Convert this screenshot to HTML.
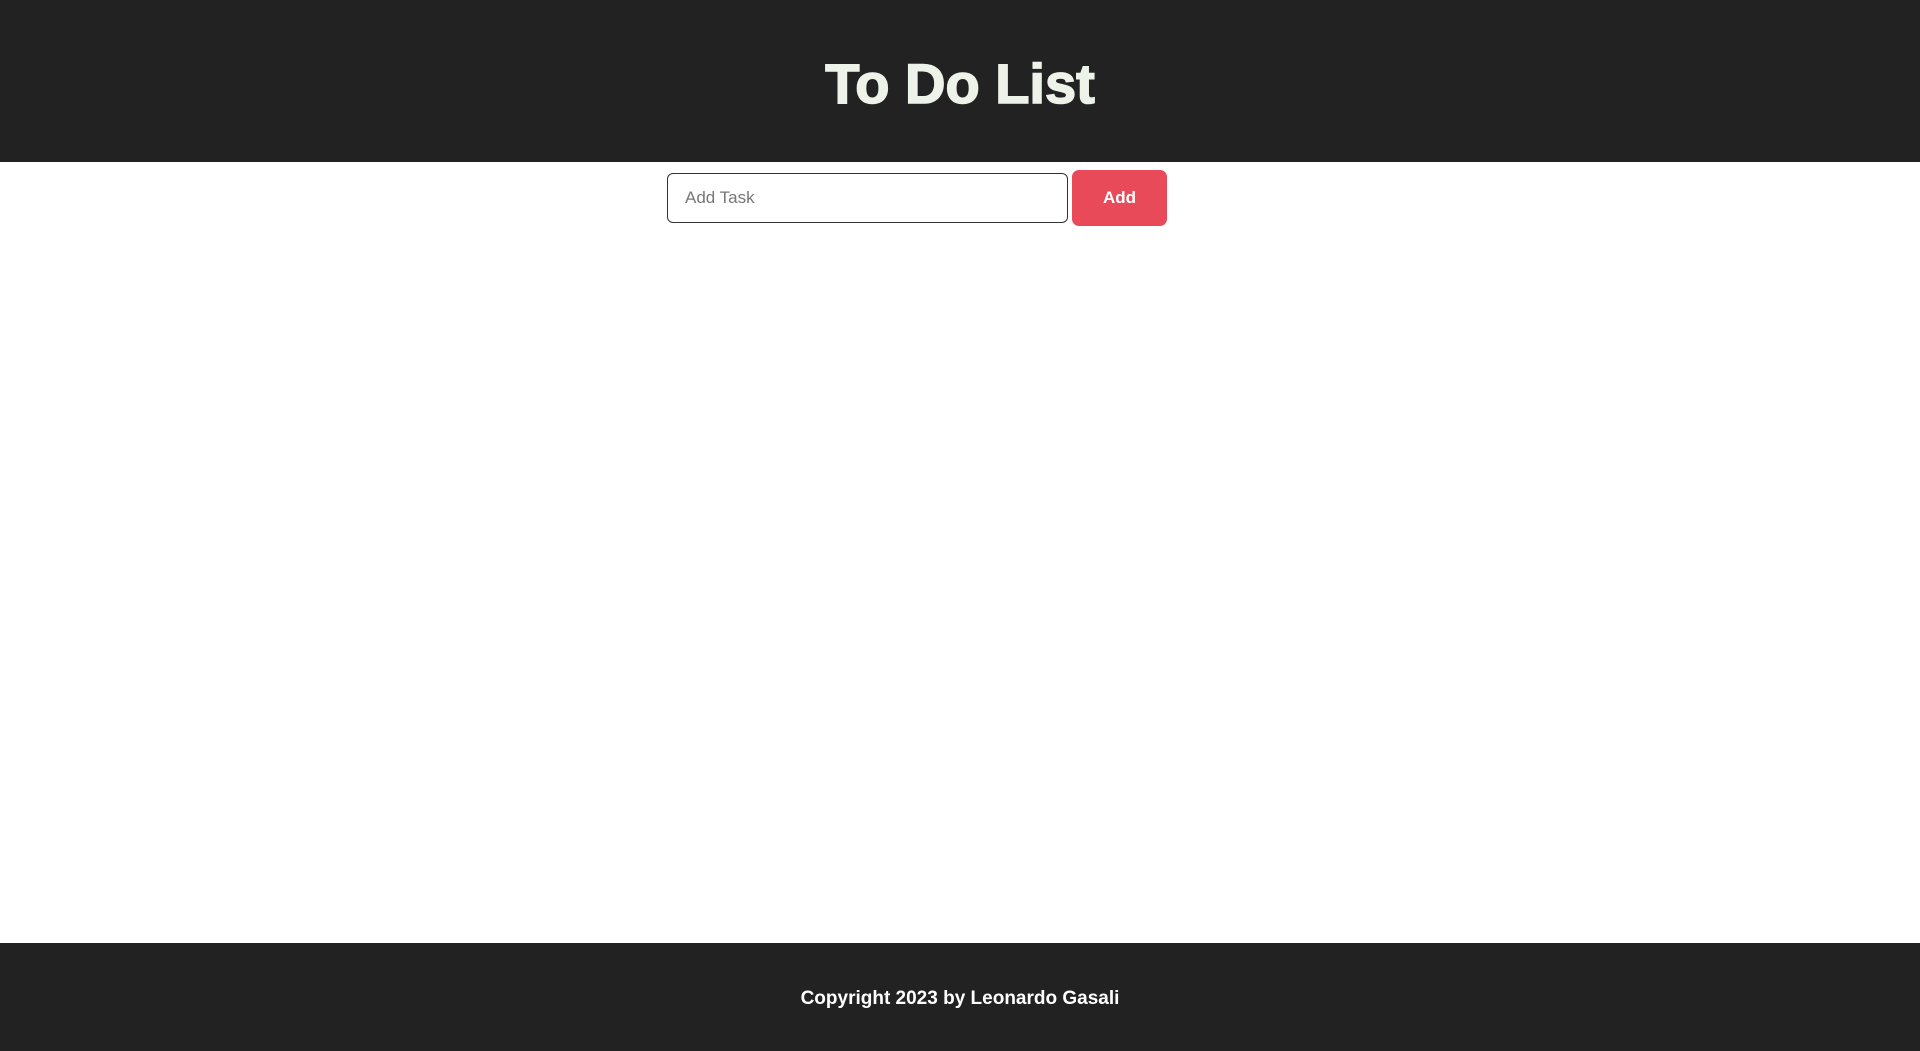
<!DOCTYPE html>
<html><head><meta charset="utf-8"><style>
html,body{margin:0;padding:0;width:1920px;height:1051px;background:#fff;font-family:"Liberation Sans",sans-serif;position:relative;overflow:hidden}
header{position:absolute;left:0;top:0;width:1920px;height:162px;background:#222;display:flex;align-items:center;justify-content:center}
header h1{margin:0;color:#eef3ea;font-size:56px;font-weight:bold;letter-spacing:0px;position:relative;top:2px;-webkit-text-stroke:1.6px #eef3ea}
.input{position:absolute;left:667px;top:173px;width:399px;height:48px;border:1px solid #333;border-radius:6px;box-sizing:content-box}
.input span{position:absolute;left:17px;top:14px;font-size:17px;color:#777}
.btn{position:absolute;left:1072px;top:170px;width:95px;height:56px;background:#e84a5a;border-radius:7px;color:#fff;font-weight:bold;font-size:17px;display:flex;align-items:center;justify-content:center}
footer{position:absolute;left:0;top:943px;width:1920px;height:108px;background:#222;display:flex;align-items:center;justify-content:center;color:#fff;font-weight:bold;font-size:19px}
footer span{position:relative;top:2px}
</style></head><body>
<header><h1>To Do List</h1></header>
<div class="input"><span>Add Task</span></div>
<div class="btn">Add</div>
<footer><span>Copyright 2023 by Leonardo Gasali</span></footer>
</body></html>
